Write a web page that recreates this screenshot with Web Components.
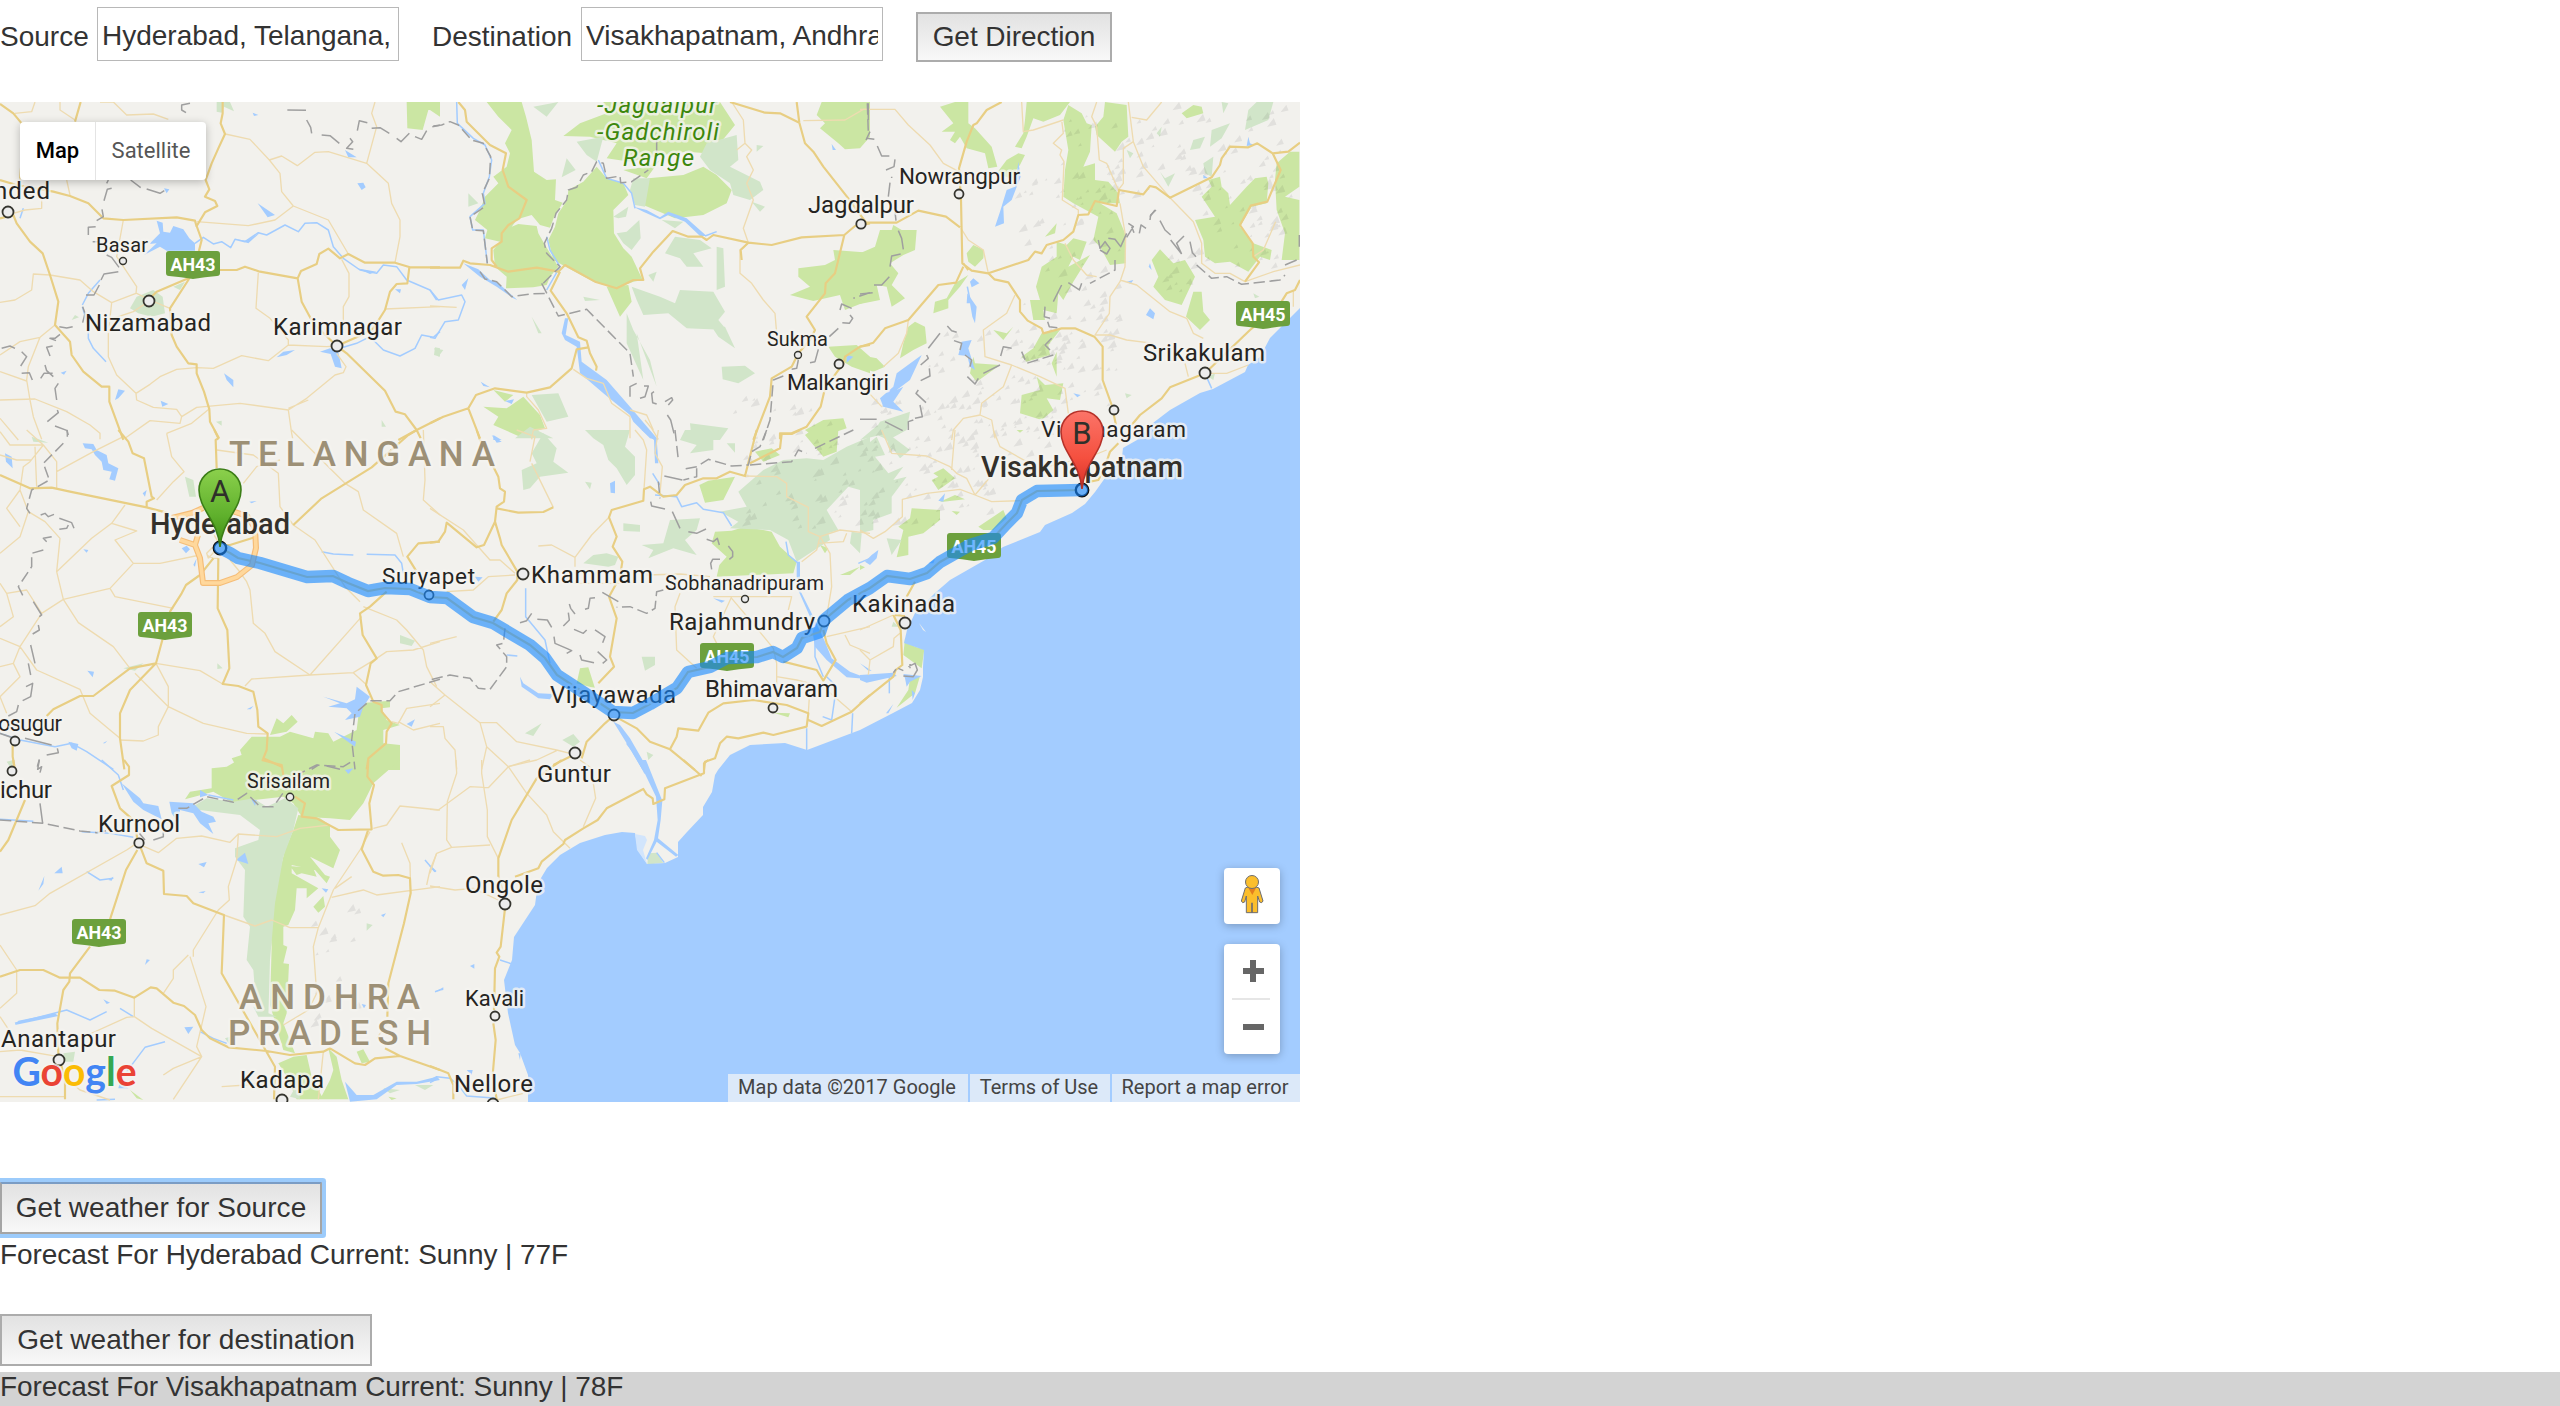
<!DOCTYPE html>
<html lang="en">
<head>
<meta charset="utf-8">
<title>Directions and weather</title>
<style>
html,body{margin:0;height:100%}
body{background:#fff;color:#333;font:28px/34px "Liberation Sans",Arial,sans-serif;overflow:hidden}
</style>
</head>
<body>
<weather-app></weather-app>
<script>
const define = (name, html, setup) => customElements.define(name, class extends HTMLElement {
  constructor() {
    super();
    this.attachShadow({mode: 'open'}).innerHTML = html;
  }
  connectedCallback() { if (setup) setup(this.shadowRoot, this); }
});

define('text-field', `
<style>
:host{display:flex;align-items:center;font-size:28px;white-space:nowrap;letter-spacing:var(--track,0)}
.box{box-sizing:border-box;width:302px;height:54px;border:1px solid #b8b8b8;padding:3px 4px 0;line-height:50px;overflow:hidden;margin-left:var(--gap,8px)}
.in{overflow:hidden;height:48px}
label{width:var(--label);flex:none;padding-top:5px}
</style><label><slot name="label"></slot></label><div class="box"><div class="in"><slot></slot></div></div>`);

define('push-button', `
<style>
:host{display:block;width:var(--w);flex:none}
button{display:block;box-sizing:border-box;width:100%;height:var(--h,52px);padding:0;border:2px solid #acacac;background:linear-gradient(#e2e2e2,#f8f8f8);color:#333;font:inherit;line-height:46px;white-space:nowrap;letter-spacing:var(--track,0.05px)}
:host([focused]) button{border-color:#7a9cc4 #a5a5a5 #a5a5a5;box-shadow:0 0 0 4px #9ccbfb;border-radius:1px}
</style><button><slot></slot></button>`);

define('map-type-switch', `
<style>
:host{display:flex;width:186px;height:58px;background:#fff;border-radius:4px;box-shadow:0 2px 8px rgba(0,0,0,.25);font:22px/58px Roboto,sans-serif;color:#565656}
div{flex:none;text-align:center}
.m{width:75px;border-right:1px solid #e4e4e4;color:#000;font-weight:500}
.s{width:110px}
</style><div class="m">Map</div><div class="s">Satellite</div>`);

define('map-controls', `
<style>
:host{display:flex;flex-direction:column;gap:20px;width:56px}
div{background:#fff;border-radius:4px;box-shadow:0 2px 8px rgba(0,0,0,.25)}
svg{display:block}
</style>
<div><svg width="56" height="56" viewBox="0 0 168 168"><g fill="#fbbe2c" stroke="#6d6d70" stroke-width="3"><path d="M64 60 72 57H96L105 60 117 99 113 104 107 102 101 84V134H67V84L62 102 56 104 52 99Z"/><path d="M84 104V134" stroke-width="5"/><path d="M73 60H96L85 81Z" fill="#e47f1e" stroke="none"/><circle cx="84" cy="42" r="19.5"/></g></svg></div>
<div><svg width="56" height="110" viewBox="0 0 56 110" fill="#666"><path d="M19 24h7v-8h6v8h8v6h-8v8h-6v-8h-7zM19 80h21v6H19z"/><path d="M8 54h38v2H8z" fill="#e6e6e6"/></svg></div>`);

define('map-credits', `
<style>
:host{display:flex;gap:2px;height:28px;font:20px/26px Roboto,sans-serif;color:#444;white-space:nowrap}
span{background:#dce9f9;text-align:center;text-indent:-2px}
.a{width:240px}.b{width:140px}.c{width:188px}
</style><span class="a">Map data ©2017 Google</span><span class="b">Terms of Use</span><span class="c">Report a map error</span>`);

/* Each tile: origin of the tile on the map, then outlines in thirds of a pixel.
   g park, f forest, w water body, l river, r minor road, R highway, b/d boundary */
const tiles = [
[0,100,{
g:'M1220,6 1320,6 1320,30 1285,30 1268,90 1222,85',
f:'M390,625 410,590 460,570 488,590 495,640 455,650 415,640ZM520,560 555,545 540,570ZM650,6 690,6 702,34 672,20 665,38 650,35ZM215,660 225,645 237,652ZM648,965 665,962 665,977ZM1145,960 1158,980 1145,980ZM1305,742 1320,745 1320,770 1302,765Z',
w:'M432,465 470,430 448,432 480,400 470,362 488,368 490,395 510,398 520,378 550,388 568,415 585,430 585,452 500,452 480,440ZM1035,150 1070,172 1045,172ZM773,310 825,345 803,352ZM960,755 990,745 1015,755 1025,805 1005,800 992,762ZM1072,250 1090,248 1097,262 1085,270ZM345,900 355,868 375,872 355,895ZM482,902 505,912 487,920ZM672,820 700,840 700,862 680,840ZM758,38 775,45 762,48ZM492,265 508,268 500,280ZM830,772 850,755 885,750 860,765ZM1185,568 1203,568 1200,580ZM182,818 200,812 192,824ZM708,418 740,422 780,398 745,430ZM1070,505 1130,515 1110,522Z',
l:'M585,430 610,412 640,432 665,425 692,443 705,418 735,425 775,398 800,405 855,375 895,395 915,370 950,368 985,390 1000,440 1030,475 1080,510 1130,520 1150,495 1190,500 1220,540 1290,570 1310,600M1020,745 1070,730 1110,710 1150,750 1200,768 1245,745 1265,705 1300,712 1320,695M247,615 265,580 300,540M247,620 265,680 265,715 280,745 318,785M60,355 70,325',
R:'M0,12 40,40 65,70M242,6 225,65M0,240 50,255 160,275 210,288 265,310 310,355 370,360 530,352 585,362 590,380M668,6 668,40 662,70 675,102 655,145 635,190 617,240 628,268 615,290 645,303 652,318 615,337 590,378 605,420 585,500 565,540 510,625 515,705 530,740 565,790 590,793 590,820 612,875 628,928 630,965 657,1015M0,355 40,345 50,370 90,425 128,460 150,525 175,605 165,675 210,725 215,765 250,815 305,860 328,860 328,905 370,1020M660,510 710,510 735,500 780,515 893,535 903,513 950,492 958,462 985,446 1020,475 1045,462 1095,488 1185,488 1230,502 1320,502M893,535 905,605 940,670 1010,738 1040,760 1155,872 1187,935 1215,943 1250,990 1320,955M1228,502 1222,550 1190,552 1170,575 1155,630 1120,685 1085,705 1010,738M1195,1020 1250,990 1262,1015M450,595 470,575 565,535M60,240 65,180',
r:'M300,6 340,6 380,45 460,42 505,58M676,102 750,118 808,180 840,220 845,275 880,318 985,360 1045,462M808,180 845,168 892,197 945,157 985,155 1100,190 1130,80 1115,40 1125,6M1100,190 1165,250 1175,310 1200,360 1200,410 1185,488M590,365 745,377 825,360 880,318M370,360 350,470 410,560 408,580 335,608 280,575 240,540 150,525 100,522 95,570 45,600 0,607M410,580 450,600 510,625M165,675 120,712 60,725 0,765M120,712 85,800 80,840 90,900 100,950 125,1018M0,815 80,843M0,900 105,897 200,935 270,975 300,1000 300,1018M0,955 55,1020M335,608 325,700 325,770 350,825 408,880 410,900 460,922 530,928 545,950 540,970 450,962 375,1015M325,660 400,635 445,605M408,880 450,853 480,830 530,808 590,803 640,805 725,767 805,782 865,735 980,740 1010,738M1010,760 1038,800 1030,818 1005,825 920,895 865,930 720,910 590,922 545,950M865,930 875,1000 878,1015M775,518 768,625 810,655 865,720 865,735M1025,478 1047,520 1047,590 1030,620 1030,700M1155,627 1320,620M180,6 180,30 225,60M45,40 95,35 105,6M500,1000 575,970 630,925M865,925 925,900M40,340 75,330 125,325 125,300M210,285 200,240',
b:'M570,10 545,15 545,30 558,38M862,30 918,31M920,60 932,82 935,100M965,105 990,107 1018,130M1050,115 1058,125 1040,145 1060,148M1072,92 1078,62 1102,68M1115,85 1140,83 1168,100M1190,115 1203,125 1228,100M1245,110 1265,118 1280,92M1297,80 1320,76M325,240 320,250M335,265 322,268 312,302M306,328 310,350 290,362M287,380 265,382 265,405M278,425 295,425M320,465 335,472 357,502M355,515 312,522 303,540M298,555 282,585 258,585M248,620 255,640 248,668M178,680 200,684 218,680M180,703 165,715 150,715 168,722M158,738 140,742 150,768M5,745 30,738 45,745M65,755 80,770 62,798M65,820 88,818 97,840M135,795 140,812 160,830M122,835 132,820 158,820M175,850 165,865 170,900M172,930 175,938 142,965M165,978 202,992 202,1010M392,240 422,263M440,267 480,280 493,272'}],
[430,100,{
g:'M170,6 275,6 288,50 305,120 312,215 350,240 378,238 375,300 398,308 372,352 360,383 330,375 305,345 262,358 245,380 265,372 320,378 325,400 345,435 385,500 360,530 350,555 310,562 228,565 230,530 195,500 190,450 210,425 165,415 172,390 135,360 150,330 165,290 205,250 190,230 230,200 240,160 225,130 245,90 205,50ZM355,420 375,380 385,340 412,300 415,270 460,245 500,200 530,235 580,250 595,285 550,330 552,400 580,445 605,470 638,540 610,545 560,565 490,545 425,510 370,480ZM530,560 595,555 605,605 570,650ZM400,108 450,70 530,40 520,6 870,6 915,75 870,130 830,160 770,155 700,165 600,185 530,175 560,130 480,110ZM580,210 650,200 690,180 650,235ZM655,235 760,225 820,200 860,225 905,270 890,310 820,345 735,355 640,315ZM1175,6 1320,6 1320,110 1290,145 1245,148 1225,130 1170,85 1185,70 1160,45ZM1210,450 1320,458 1320,600 1245,630 1230,585 1150,603 1080,585 1140,560 1105,530 1105,505 1185,495 1215,480ZM1195,740 1280,735 1320,770 1320,820 1265,800 1215,770ZM160,920 230,925 280,890 330,945 345,985 300,1000 270,1010 190,975 205,950ZM190,870 250,885 225,905ZM1125,990 1180,960 1240,955 1250,985 1160,1015ZM0,6 30,6 30,50 0,30Z',
f:'M410,175 437,210 395,232ZM610,235 660,235 645,320 615,315 600,270ZM830,130 920,105 925,180 900,200 990,245 1000,270 960,300 910,285 900,250 840,210 810,170ZM440,125 520,110 500,185 470,165ZM310,20 385,6 350,50ZM115,280 145,310 115,320ZM560,400 590,395 628,360 632,415 605,450 580,430ZM550,350 595,320 588,350 565,355ZM695,360 760,365 735,385ZM705,460 735,410 810,420 845,445 790,460 820,500 770,500 750,475ZM860,440 880,445 885,560 860,570ZM605,560 690,590 735,610 750,570 850,575 885,635 865,660 890,690 770,685 715,640 640,645 620,600ZM845,680 885,680 915,745 865,710ZM590,640 610,690 660,780 680,860 620,700 640,840 590,730ZM875,800 945,797 975,820 925,850 878,838ZM460,590 510,600 465,603ZM305,885 385,880 415,950 350,965ZM780,970 895,985 870,1020 785,1020ZM965,305 1005,320 990,335ZM255,1015 300,980 370,1015ZM12,745 40,750 25,770ZM305,650 335,700 325,700ZM980,135 1000,138 980,155ZM655,525 680,515 670,545Z',
w:'M100,490 145,508 180,540 200,545 262,600 250,595 200,560 150,530ZM395,700 405,655 415,655 407,705 450,725 455,785 530,840 600,920 685,1020 660,1015 610,965 600,945 520,880 450,820 440,740 405,720ZM152,845 180,862 160,858ZM225,903 252,898 245,912ZM95,555 115,535 105,570ZM610,320 650,330 690,352 715,335 770,355 830,408 810,408 765,365 715,345 690,358 640,335ZM1250,765 1270,770 1250,788ZM190,1005 215,1020 190,1020ZM1205,132 1218,150 1208,150Z',
l:'M80,6 82,70 130,115 165,135 185,180 178,230 160,280 165,310 120,350 128,390 160,390 172,490M350,570 390,500 360,450 350,410M505,180 530,235 580,250 605,280 615,325M825,408 860,395M0,570 25,600 95,585 105,605 85,660 45,665 15,715 0,712',
R:'M85,6 105,30 110,65 180,135 228,160 218,210 235,260 290,300 268,355 235,375 215,400 215,425 185,445 185,480 200,500M0,503 90,503 100,482 120,490 180,495 235,515 320,503 385,515 405,495 495,545 560,565 610,540 640,540 630,505 670,455 728,393 775,410 815,410 830,420 850,405 955,428 1025,435 1115,412 1243,405 1275,378 1320,370M390,515 362,572 410,640 445,712 470,722 480,760 500,800 498,812M475,742 440,748 425,805 360,862 290,878 195,865 138,885 115,925 40,950 0,970M115,925 150,1015M900,6 1005,38 1050,40 1108,68 1125,130 1150,155 1180,200 1255,295 1310,370M1100,6 1108,68M1243,405 1215,520 1187,550 1185,580 1130,650 1155,690 1140,720 1105,760 1085,800 1025,835 1020,890 970,1020M1320,735 1290,740 1245,770 1240,790 1185,865 1172,920 1130,980 1085,1000 1050,1000 1050,1018M955,428 932,450 935,480',
r:'M905,6 940,60 945,130 965,150 950,170 970,210 950,250 970,300 940,385 955,428 930,450 930,520 965,550 1000,600 1035,640 1040,700M920,150 945,130M1120,62 1245,60 1300,28 1320,28M0,618 80,622M430,808 470,835 520,850 545,910 600,950 600,1015M600,930 650,945 670,990M290,880 290,890 325,930 350,985 310,990 305,1018M645,960 665,985 685,1018',
d:'M10,78 35,75 60,65 85,75 125,120 160,130 182,170 178,235 157,280 165,320 120,350 128,390 160,392 172,490M150,515 165,537 200,545 245,590 300,582 350,580M340,550 390,500 350,460 343,430 365,385 378,340 410,300 415,270 440,262 460,225 485,215 500,185 520,190 530,235 570,228 572,248 605,245 655,210M680,155 680,120M335,550 385,648 470,628 600,760 610,830M1320,578 1270,595M1060,828 1030,840 1020,960 1000,1020',
b:'M1265,625 1235,612 1230,630M1260,645 1268,655 1258,670 1237,668M1225,685 1198,710M1165,748 1155,785 1140,788M1105,780 1100,805 1085,808M620,850 600,860 600,890M642,858 655,858 645,890 630,895M672,875 665,880 668,908 680,912M705,905 725,893 728,900 715,915M712,945 722,960 732,1000M1315,10 1315,60M1320,95 1308,120'}],
[860,100,{
g:'M0,10 22,10 20,100 0,118ZM240,20 285,6 325,6 325,70 345,85 395,140 412,200 385,205 375,160 320,145 300,110 285,130 270,120 285,95 245,95 280,70ZM410,220 440,180 475,160 495,165 480,195 450,235ZM500,6 630,6 600,45 550,65 520,55 500,110 485,145 465,140 490,100 495,60ZM610,60 625,15 665,40 680,70 695,75 690,155 670,200 705,190 705,240 745,245 775,280 780,310 720,310 770,340 795,400 797,490 750,495 720,440 700,420 715,350 640,310 610,290 615,210 625,150ZM705,80 730,50 735,6 800,15 805,110 785,125 765,155 710,105ZM965,40 1000,15 1025,20 1030,40 980,55ZM1045,240 1080,230 1085,260 1105,280 1110,315 1160,260 1185,235 1220,230 1225,250 1220,310 1175,320 1140,380 1180,430 1235,450 1230,480 1200,470 1165,515 1110,485 1065,490 1035,470 1030,420 1005,360 1065,350 1025,290 1055,260ZM1245,240 1250,190 1290,155 1318,155 1318,260 1275,290 1318,300 1318,480 1265,480 1275,400 1250,330ZM875,480 900,448 940,490 975,480 1005,530 965,615 915,600 880,560 895,530ZM1000,575 1025,575 1030,635 1050,660 1020,690 978,650ZM320,460 340,435 372,450 370,475 345,500 325,485ZM590,425 620,435 640,415 680,425 660,480 640,470 625,500 690,465 640,545 610,600 595,580 590,640 550,630 555,660 520,660 510,600 540,600 528,560 545,500 590,470ZM0,460 45,440 60,390 95,390 100,375 125,390 170,390 165,450 130,465 90,490 115,520 95,555 135,595 95,620 80,560 50,555 60,600 0,612ZM325,525 300,560 265,600 265,625 220,640 225,605 260,595 285,550ZM120,775 130,730 145,680 165,665 195,680 200,730 160,750ZM0,765 50,775 75,800 40,815 0,800ZM400,690 440,700 460,680 430,720ZM485,770 520,745 545,700 600,690 565,735 570,765 500,785ZM340,770 345,790 420,795 350,845 330,820ZM485,885 540,870 530,830 555,855 610,850 600,900 560,895 580,930 545,960 480,940ZM555,410 590,370 585,400ZM575,790 590,755 590,830Z',
f:'M1165,30 1190,6 1240,6 1225,60 1155,90ZM1000,120 1035,110 1020,145 990,150ZM1055,90 1110,70 1085,115 1050,140ZM1085,6 1105,10 1090,40ZM900,215 915,235 945,220 925,260ZM60,965 150,935 140,990 85,1020 40,1000ZM800,150 820,160 810,175ZM1030,190 1060,170 1055,230 1035,220ZM1045,830 1065,820 1060,840ZM795,880 815,885 800,895ZM890,100 905,80 900,110ZM1180,580 1198,590 1185,595ZM120,990 0,1020 60,970Z',
w:'M475,185 482,230 455,300 430,320 432,370 405,380 420,335 440,270 465,260ZM322,580 350,620 345,670 337,650 330,610 320,610ZM330,545 340,535 358,550 335,562ZM305,725 335,720 325,745 345,810 330,800 322,768 295,765ZM185,765 150,840 110,870 130,860 100,905 130,935 70,920 60,895 100,860 110,820ZM858,645 870,625 885,640 880,658ZM870,490 875,510 866,500ZM1165,110 1170,130 1182,135 1160,138ZM1030,225 1045,235 1030,235ZM800,545 820,540 812,552ZM640,880 662,885 652,892Z',
l:'M1035,820 1055,865M322,560 330,600',
R:'M425,6 380,30 350,70 340,75 320,125 297,205 303,300 307,490 335,512 385,520 505,480 525,455 545,460 560,435 610,420 640,395 655,345 685,343 705,303 770,318 777,270 850,283 870,258 888,262 930,293 1055,232 1080,195 1085,175 1110,140 1165,142 1192,130 1238,160 1285,155 1320,128M1238,160 1262,210 1222,305 1172,317 1140,375 1178,430 1180,470 1197,487 1155,545M15,368 110,368 175,332 258,350 300,382M310,500 288,548 235,555 145,660 75,685 40,728 0,740M310,490 325,510M385,520 403,538 445,547 480,600 480,635 503,662 545,685 550,700 605,685 645,685 703,710 728,740 728,840 755,915 768,975M1320,540 1305,570 1280,580 1255,620 1170,690 1035,820 930,862 905,895 840,945 815,975',
r:'M0,28 105,28 145,75 210,135 250,190 297,215M485,6 490,95 520,90 610,60M605,60 610,100 580,130 605,150 600,165 612,185 607,300 655,330 655,345M710,6 695,50 710,80 718,180 740,190 775,270 790,250 790,145 820,125 805,6M815,52 860,60 905,6M820,125 850,200 930,293 1000,365 1025,430 1025,490 1065,520 1110,520 1155,545 1240,515 1320,495M780,310 797,410 795,500 780,545 750,590 748,640 705,705 750,705 800,720 880,730M780,540 830,555 930,635 980,655 1000,700 1030,715M303,385 325,420 370,450 385,520M465,585 440,640 370,690 375,770 455,795 540,830 615,865 625,940M455,795 430,860 365,910 360,945 310,955 280,990 275,1020M145,660 140,700 115,760 70,800M0,850 65,920M975,790 985,830M1035,820 1100,820 1165,795M1247,365 1210,450 1180,470M615,430 640,480 680,525 710,530M360,945 395,960 405,1015M1300,570 1300,620',
d:'M22,10 25,100M20,115 43,118M885,330 870,350M1010,495 1055,535 1100,530 1145,553 1260,540 1275,525M765,480 765,510 690,550M580,765 500,790 485,755',
b:'M52,138 65,168 88,168M105,178 102,200 78,210M95,230 95,234M90,248 85,290M105,335 108,362M115,392 125,415 130,448M122,462 95,468 90,500M88,530 65,555 42,555M38,578 0,582M900,362 915,390 932,405M932,420 965,462M965,462 950,430 972,408M990,425 997,458 1008,470M1275,495 1310,480M1318,405 1318,440M870,360 872,345 888,330M625,548 658,570 665,550M605,555 580,605M555,620 553,650 570,655M563,665 568,680 592,683M575,715 555,735 570,750M455,745 430,740 422,768M420,795 370,820M355,835 345,852 322,830M315,765 335,780 330,800M240,700 205,745M262,678 275,692 290,697M282,722 305,730 300,750M200,765 205,775 182,795M208,805 210,828 182,842M175,870 168,880 198,908M180,915 187,950 165,955M160,960 145,965 145,990M75,965 128,992M0,958 50,958M715,420 720,445 735,425 750,445 740,462 720,450M745,415 765,418 782,440 800,400M805,370 820,380 800,412M838,400 843,375 858,385M815,380 822,398'}],
[0,430,{
g:'M720,960 755,920 840,920 870,905 940,925 945,905 985,910 1000,935 1070,900 1080,820 1170,812 1170,832 1145,835 1160,870 1200,885 1150,900 1150,940 1200,945 1200,1020 715,1020 695,985 725,975ZM810,915 830,865 850,880 875,855 893,875 860,905Z',
f:'M555,140 580,150 588,200 568,200ZM1200,615 1245,632 1235,648 1200,640ZM95,20 145,38 100,35ZM370,715 430,700 405,722ZM652,700 668,715 652,717ZM20,995 40,990 35,1018Z',
w:'M248,40 280,42 290,60 320,75 325,100 355,115 345,152 328,148 335,125 310,120 305,95 285,75 275,58 255,55ZM15,70 35,80 38,115 18,95ZM545,355 560,347 570,358 558,370ZM580,405 590,385 585,410ZM970,800 1040,820 1065,808 1070,770 1110,800 1090,830 1080,860 1035,870 1055,850 1040,835 985,830 1020,820ZM262,722 282,725 278,742ZM740,838 760,828 752,838ZM250,358 265,360 260,368ZM428,190 440,180 435,200ZM748,215 770,213 755,220ZM205,935 235,942 230,962 215,955ZM1002,905 1068,935 1065,950ZM308,940 322,932 315,940ZM1220,882 1245,868 1235,890Z',
l:'M965,365 1000,372 1060,375M1100,373 1185,375 1205,400 1210,430M0,910 60,930 165,950 215,940 260,965 305,995 340,1018',
R:'M0,135 90,175 155,173 210,185 440,232 500,248M355,0 385,35 398,70 432,85 455,200 462,205 440,215 440,232M643,0 655,25 647,30 650,115M1250,0 1225,15 1115,112 965,205 880,285M640,385 600,435 558,465 545,490 510,545 487,630 468,700 390,780 360,850 360,925 373,1018M468,700 390,715 280,798 240,798 160,838 140,858M655,385 653,535 682,600 688,715 668,762 715,768 760,785 772,840 775,890 803,910 800,960 790,985 845,1010M660,345 690,345 770,320M1320,335 1255,340 1222,380 1250,425M1160,485 1110,530 1080,550 1088,615 1130,685 1112,700 1098,765 1120,815 1145,825 1145,845 1175,880 1160,905 1158,940 1105,985 1100,1018M38,940 38,980 45,1018',
r:'M80,0 130,45 170,95 170,175M0,75 50,90 95,90M130,45 90,95 70,110 60,180 85,245 135,275 180,325 170,425 190,508 235,578 340,650 390,715M130,45 30,45 0,5M105,50 110,170M170,125 280,65 370,20M500,10 515,80 552,125 520,155 470,210M375,225 335,280 275,325 170,425M335,280 410,303 345,330 400,400 480,400 600,375M60,180 20,235 60,290M0,370 60,320 85,245M0,590 40,560 20,490 0,460M20,490 80,480 125,550 60,650 0,625M125,550 190,508 330,475 400,400M330,475 345,500 520,535M60,650 110,720 240,778 270,850 330,900 360,925M60,650 40,700 0,710M40,700 60,740 0,800 20,850M468,700 600,722 668,762M735,768 755,747 930,735 1060,728 1130,685M1060,728 1100,765M930,735 1085,560M690,390 715,420 740,455 750,480 760,580 795,610 825,665 930,735M405,730 505,830 610,880 740,910 803,912M468,700 505,770 505,830 475,890 475,915 430,933 360,930M1090,530 1190,570 1220,600 1270,660 1280,710 1310,770M1130,685 1160,665 1240,660 1320,635M1175,875 1195,880 1220,835 1320,820M1195,875 1240,900 1320,880M875,0 970,95 1035,160 1075,185 1090,240 1190,310 1210,380M650,60 760,75 835,130 840,230 880,285 945,330 1035,470 1080,515M1270,0 1275,150 1270,210 1320,255M730,160 770,110 840,90M620,260 645,320 660,345 625,385M625,385 620,370 645,345M655,385 640,385 620,375',
d:'M190,40 130,100 148,150 95,180 80,235 95,258M130,360 95,370 95,410 55,470 70,500M1320,748 1195,785 1170,812 1110,812 1065,850 1055,930 1065,1018',
b:'M200,0 205,15M122,255 135,250 145,260 162,253M178,265 215,278 222,295M205,285 200,295 178,298M155,320 130,325 140,335M100,515 125,555 118,560M115,585 118,600 98,612M92,645 105,700M85,700 92,735M78,770 98,760 92,800 68,812M55,825 50,845 25,858M0,910 50,928M75,925 155,945M172,955 175,968 140,975M118,988 112,1010M935,1018 955,1005M980,1008 1020,1018'}],
[430,430,{
g:'M855,305 905,302 945,290 1025,305 1050,350 1100,395 1090,430 860,440 868,405 890,380 845,340ZM808,165 835,152 915,140 880,210 825,218ZM1125,15 1145,0 1225,0 1220,65 1180,80 1150,45ZM975,65 1025,55 1050,75 1000,95ZM450,715 475,712 495,775 440,760ZM265,0 300,0 305,25 270,18ZM1030,848 1080,850 1075,862ZM1230,435 1290,410 1260,435ZM1170,345 1195,355 1185,370Z',
f:'M925,185 1000,120 1060,90 1130,85 1180,90 1250,50 1320,20 1320,150 1290,180 1255,170 1190,240 1225,300 1195,310 1200,330 1100,395 1075,330 1020,300 900,295 925,275 870,245 950,230ZM280,180 275,120 320,100 305,70 340,10 380,55 370,95 415,128 330,140 300,175ZM465,0 600,0 585,50 615,80 615,135 590,165 560,115 535,90 520,45 490,25ZM765,0 850,0 850,60 780,70 800,45 750,30ZM580,280 630,285 630,305 580,303ZM635,345 700,340 720,270 810,265 800,300 765,330 800,375 730,355 655,385 670,360ZM460,400 490,375 530,370 565,380 555,405 535,410ZM635,680 675,680 675,705 645,722ZM285,910 335,880 310,918ZM397,930 430,912 450,935 430,950ZM1265,305 1295,310 1290,370 1260,340ZM465,155 485,158 480,178ZM650,965 670,975 655,990ZM890,40 915,40 915,68Z',
w:'M635,0 655,0 680,25 685,100 675,100 672,30ZM540,160 555,152 555,190 542,188ZM270,740 280,760 325,790 370,792 360,808 325,805 275,770ZM1100,395 1110,395 1110,480 1150,560 1185,635 1205,685 1260,725 1320,748 1250,742 1190,690 1155,650 1140,560 1100,470ZM550,875 570,885 600,925 655,1020 638,1020 590,940ZM850,505 885,512 875,518ZM135,440 158,442 145,455ZM185,15 215,35 200,38Z',
l:'M668,130 690,165M675,195 740,200 755,230 800,218 820,238 880,248 905,288M287,475 287,560 345,630 360,700M1068,335 1075,375 1105,400M230,675 262,678M1130,895 1130,960M1268,850 1265,910M1190,740 1210,760 1215,800 1205,870 1178,860M1155,600 1155,680 1180,740M1320,385 1285,400M590,940 605,960 640,1020',
R:'M140,0 150,30 205,140 210,175 225,185 222,215 200,230 195,275 210,325 215,345 262,425 262,450 230,490 215,540 190,575M200,235 265,248 340,246 370,232M195,275 162,345 140,352 50,278 45,305 25,335 0,338M1110,0 1085,12 1055,12 1050,55 960,100M980,0 945,138 900,125 860,145 820,145 765,165 740,195 700,200 660,170 642,178 640,212 545,240 537,262 560,320 548,350 577,395 570,440 537,500 560,565 540,680 552,710 505,760M550,858 525,880 470,935 455,985M560,862 620,895 660,935 720,958 740,920 745,895 805,902 835,848 880,820 970,810 1070,825 1135,850 1130,890 1030,915 1000,908 925,925 890,920 870,940 855,985 825,995 822,1020M720,958 795,1020M1135,870 1175,888 1265,845 1320,795M1060,695 1160,720 1180,752 1217,690 1190,640 1180,600M370,1005 430,975',
r:'M615,0 640,30 650,60 642,178M685,0 675,70 697,110 690,190M305,100 370,232M260,0 315,20 300,95M0,235 100,300 180,390 210,390 255,430M50,485 130,480 175,440 255,435M325,348 365,345 435,382 435,410M435,382 485,315 537,262M650,435 750,432 840,440M430,460 570,460M750,490 735,530 740,660 800,715M850,500 905,500 850,620 860,640M905,500 1085,500 1075,540M905,505 960,570 1030,655 1040,700 1040,810M945,138 1040,140 1070,160 1070,200 1135,232 1135,305 1170,320 1230,300 1320,310M1170,320 1200,370 1205,470 1190,560M1165,340 1240,335 1250,310M1170,320 1160,360 1115,395M1190,620 1320,590M1245,615 1260,645 1320,670M0,640 80,620M0,755 45,795 150,878 200,878 260,935 380,960 420,970M45,795 0,830M150,878 170,950 155,1018M170,950 235,1010 320,990 380,962M0,890 40,890 45,925 75,960 80,1018M1040,740 1100,750 1140,760M1140,770 1135,850M1190,780 1265,845',
d:'M735,0 745,90M1010,0 990,50 965,65 955,105 905,108 835,88 800,110 760,118M960,105 1085,95 1105,60 1130,70M1155,55 1270,0M800,115 800,140 760,150M685,155 690,205M700,480 680,485 675,535 650,550 600,530 560,532M225,595 220,640 200,645 230,680 230,710 180,778 145,775 120,745 60,735 0,750',
b:'M703,138 757,150M662,215 665,228 705,237M727,245 750,295M775,305 800,310 828,297M830,328 850,335 862,325 868,345M895,348 908,365 908,380 898,388M870,388 848,388 842,400 845,418M517,487 565,515M495,503 480,505 475,535 465,538M418,522 422,535 435,552M415,548 418,570 400,588M432,598 460,610 470,600M495,600 525,620 518,638M503,665 530,690 518,700M450,675 455,690 492,698M372,620 375,640 410,655 425,662 410,670M322,568 352,570 365,592M270,578 290,572 305,550'}],
[860,430,{
g:'M155,235 240,240 240,270 190,310 145,320 145,375 110,382 130,300 115,290 150,265ZM355,290 430,240 440,265 400,300 370,300ZM135,625 165,650 193,658 185,715 130,675ZM180,738 165,790 110,833 145,780 150,745ZM215,150 235,140 220,130 250,115 285,145 235,180ZM240,215 285,195 315,208 250,215ZM275,243 300,245 290,255ZM0,405 15,412 0,420ZM470,0 490,0 480,8Z',
f:'M0,60 50,20 75,75 45,80 85,130 130,110 100,150 140,140 95,200 95,250 40,270 40,300 0,310ZM45,0 70,0 150,60 120,85 80,30ZM80,325 125,330 95,375ZM80,20 110,40 90,70ZM100,575 115,590 95,590Z',
w:'M15,395 35,375 55,360 50,385 30,405ZM235,212 255,190 250,215ZM0,735 100,728 110,738 20,758 0,750ZM78,850 100,822 85,850ZM205,400 225,388 220,400ZM0,700 35,722 25,722ZM130,732 185,738 150,755 140,770 135,745ZM155,780 165,790 158,810Z',
l:'M88,740 88,790',
R:'M165,455 140,500M100,555 122,600 127,705 107,720 100,740 0,820M105,555 135,558M775,40 750,65 735,110 715,150 690,155',
r:'M65,0 95,70 200,78 270,110 290,130 320,145 345,195M285,0 275,120M400,0 420,50 500,95M540,115 690,80 740,60M0,300 40,325 75,305 127,260 127,208 200,190 300,178 345,195 395,215 480,212M345,195 400,130M0,600 100,555M0,660 30,690 100,650 102,625 120,610M30,690 25,735',
b:'M145,710 165,700 172,720 160,740 130,738M100,728 108,718M115,715 130,722M150,702 150,715'}],
[0,760,{
g:'M715,0 1200,0 1120,70 1090,130 1050,180 990,175 905,170 880,130 850,110 760,120 700,130 640,95 555,118 570,95 635,85 635,25 680,20ZM895,165 960,175 990,195 990,230 1020,270 1000,325 930,290 975,345 990,350 980,370 945,330 875,315 875,340 955,385 920,415 920,385 890,385 885,450 865,495 850,500 850,555 862,560 850,610 867,612 860,760 850,790 885,880 850,870 810,735 815,560 810,490 830,370 855,270 880,210ZM870,318 940,325 950,350 905,340 890,345ZM940,440 970,408 975,440 955,458ZM835,910 880,890 920,885 935,950 970,1018 890,1018 860,950ZM985,865 1010,890 1025,960 1045,1018 960,1018 990,960 1000,930ZM390,990 430,1020 410,1015ZM1070,875 1090,868 1110,905 1085,910ZM1165,1010 1190,1015 1175,1020Z',
f:'M570,145 620,115 700,125 760,115 800,140 855,115 895,145 880,210 850,290 825,430 810,600 805,770 770,760 760,630 740,600 750,500 730,470 735,330 705,290 705,265 775,240 780,210 720,165 600,150ZM190,880 225,875 220,905 195,905ZM1100,490 1118,495 1100,512ZM760,740 830,770 775,770ZM675,835 690,830 690,855ZM1150,985 1200,990 1170,1000ZM1245,975 1300,975 1275,990ZM895,965 900,1018 870,1010Z',
w:'M508,125 580,130 605,155 640,170 648,185 625,190 640,222 600,190 580,160 540,150 535,190 515,160ZM365,70 420,115 430,130 475,138 485,178 430,150 400,125ZM708,300 735,278 745,312ZM595,312 620,306 612,322ZM163,340 185,320 188,340ZM115,392 133,348 130,372ZM553,802 580,800 565,822ZM435,615 440,598 450,600ZM45,795 55,782 165,760 175,768ZM1035,965 1070,1005 1120,1005 1190,965 1250,965 1310,950 1320,960 1250,972 1190,975 1130,1018 1050,1025ZM965,385 985,388 978,398ZM310,718 330,728 320,732ZM325,360 340,350 335,362ZM600,90 625,105 600,112ZM755,120 770,120 765,138ZM1035,30 1060,25 1045,42ZM1143,465 1158,460 1150,472ZM1085,732 1098,735 1092,745ZM360,965 385,985 355,985ZM595,397 617,393 610,400Z',
l:'M305,0 355,45 370,90M510,205 535,170M0,178 100,184M245,215 330,220 400,232M260,335 300,360 340,355M45,790 200,750 270,780 320,755M360,745 400,770M380,935 435,862 495,845M600,815 640,835 680,850M1275,300 1305,335M625,105 700,120M290,1020 345,1018M1305,695 1320,690',
R:'M372,0 387,20 387,45 335,78 360,145 405,185 412,240M417,250 440,310 490,332 492,402 560,408 580,430 672,465 665,640 745,780 825,920 822,1018M412,270 378,330 330,478M270,560 210,640 208,665 190,690 172,790 175,880 195,960 195,1018M0,650 60,630 130,630 180,653 240,653 298,690 345,692 403,713 452,682 470,685 520,728 552,738 585,765 605,810 630,835 685,862 800,873 870,885 970,875 990,865 1065,910 1095,915 1125,895 1200,888 1320,930M75,120 50,180 25,240 0,275M785,0 845,15 850,45M885,110 915,130 905,170 950,175 1015,210 1115,208 1108,130 1122,75 1102,50 1105,0M1105,208 1085,268 1120,335 1150,347 1195,345 1230,355 1232,400 1212,490 1165,670 1162,770M1155,865 1200,888M40,0 42,20',
r:'M0,465 105,437 150,400 380,270 410,250 475,278 530,235 605,228 690,247 715,222 830,230 900,205 990,195M715,222 710,300 685,380 688,420 655,450 580,570 580,590M672,465 765,498 815,480 870,503 955,503 1000,390 1080,270 1110,215M565,585 520,630 520,655 490,700M570,590 618,740 590,860 605,890 520,1018M605,890 520,925 490,945M403,713 403,770 455,805 605,890M403,770 380,772 230,840M0,555 50,630 50,700 0,745M0,770 40,830M995,412 1090,390 1130,405 1320,380M955,503 940,560 950,700 925,750 850,795M1005,385 1055,350M1205,248 1230,310 1232,400M1120,205 1160,195 1200,138 1320,150M1280,375 1290,330 1310,280M970,875 955,1018M665,980 740,975 820,960M1162,790 1130,835M0,875 60,870 175,890M0,1010 195,1010M210,965 240,990 330,1020',
d:'M0,180 130,190 155,195 240,213 290,218 330,210M535,145 560,145 620,110 700,127 740,100 780,140 820,140 870,70 900,40 950,15 1030,20 1062,0',
b:'M120,130 128,190M118,0 113,28 125,20 120,38M460,240 490,230 490,215M418,220 435,240'}],
[430,760,{
w:'M625,0 648,0 697,122 692,180 684,235 745,285 738,290 680,245 652,300 648,295 672,240 683,180 678,110Z M15,695 40,682 40,690ZM120,618 133,612 133,626ZM265,880 272,880 270,900ZM110,930 128,930 125,945Z',
l:'M210,600 243,611M0,962 20,950 60,955 85,975 110,1008 200,1015M0,318 18,335M680,278 703,308M625,0 645,40M0,968 25,955',
f:'M655,280 680,278 700,308 652,314Z',
R:'M395,0 320,55 245,180 205,295 205,350M835,0 822,10 822,40 705,85 703,118 670,132 668,115 650,103 640,87 530,145 503,180 460,205 405,240 400,252 335,305 325,325 255,350M760,0 815,48M225,445 212,560 200,578 208,590 195,625 192,750M190,790 197,840 188,945 200,1018M0,918 55,940 70,975 70,1018',
r:'M0,148 25,150 120,80 175,83 235,20 300,0M78,0 80,40 52,125 50,240 65,262 180,255M155,0 155,40 172,150 172,230 205,295M235,20 290,100 350,165 370,215 420,265M490,70 497,115 460,200M450,0 485,25M0,340 20,280 65,262M0,378 75,390 130,385 205,420M205,345 222,400M200,1020 280,1000'}]
];
const labels = `nded|-6|199|56|24
Basar|96|252|52|20
Nizamabad|85|330.5|126|24
Karimnagar|273|334.5|129|24
Jagdalpur|808|213|106|24
Nowrangpur|899|184|121|22.5
Sukma|767|346|61|20
Malkangiri|787|389.5|102|22.5
Srikakulam|1143|361|122|24
Vizianagaram|1041|437|145|22.5
Suryapet|382|584|93|22.5
Khammam|531|582.5|122|24
Sobhanadripuram|665|590|159|20
Rajahmundry|669|629.5|146|24
Kakinada|852|611.5|103|24
Vijayawada|550|702.5|126|24
Bhimavaram|705|697|133|24
osugur|-2|731|64|22
ichur|0|798|52|24
Kurnool|98|832|82|24
Srisailam|247|788|83|20
Guntur|537|781.5|74|24
Ongole|465|892.5|78|24
Kavali|465|1006|59|22
Nellore|454|1092|79|24
Anantapur|1|1047|115|24
Kadapa|240|1088|84|24
Visakhapatnam|981|477|202|29|k
Hyderabad|150|534|140|29|k
-Jagdalpur|597|113|120|24|p
-Gadchiroli|597|140|122|24|p
Range|623|166|71|24|p
TELANGANA|229|466|266|35|s
ANDHRA|239|1009|181|35|s
PRADESH|228|1045|203|35|s`.split('\n').map(s => s.split('|'));
const dots = [[8,212,5.5],[149,301,5.5],[337,346,5.5],[123,261,3.5],[861,224,4.7],[959,194,4.5],[798,355,3.5],[839,364,4.5],[1205,373,5.5],[1114,410,4.5],[429,595,4.5],[523,574,5.5],[745,599,3.5],[824,621,5.5],[905,623,5.5],[614,715,5.5],[773,708,4.5],[575,753,5.5],[15,741,4.5],[12,771,4.5],[139,843,4.7],[290,797,3.7],[505,904,5.5],[495,1016,4.5],[59,1060,5.5],[282,1100,5.5],[493,1104,5.5]];
const shields = [[166,251,'AH43'],[138,612,'AH43'],[72,919,'AH43'],[1236,301,'AH45'],[700,643,'AH45'],[947,533,'AH45']];
const route = 'M220,548 230,553 238,558 260,563 307,577 333,576 348,583 368,591 385,588 410,589 430,597 447,598 473,617 493,623 530,645 545,658 557,675 583,692 613,712 633,713 650,704 677,688 688,672 710,667 727,658 757,657 773,652 783,657 797,648 802,638 820,632 824,620 848,600 870,588 887,576 910,579 927,573 940,562 970,545 993,538 1007,523 1017,513 1022,500 1037,491 1082,490';
const ocean = 'M1300,308 1270,338 1260,357 1248,365 1245,372 1213,389 1200,393 1170,410 1153,423 1137,440 1123,448 1122,457 1105,478 1095,492 1085,504 1072,513 1045,525 1040,532 1003,547 985,560 950,580 935,593 915,613 907,630 904,643 924,650 923,667 923,677 920,690 912,703 893,713 860,730 852,733 807,750 785,743 750,745 730,755 718,770 715,775 712,792 703,807 703,815 687,832 678,842 678,857 665,863 647,864 638,850 635,833 622,832 605,835 580,843 560,855 547,868 538,883 535,905 514,937 512,960 504,980 508,1013 515,1045 520,1053 528,1075 528,1102 1300,1102Z';

/* small slanted hill shadows scattered over the eastern highlands */
function relief() {
  let seed = 7, out = '';
  const rnd = () => (seed = (seed * 16807) % 2147483647) / 2147483647;
  const areas = [[1060,110,230,90,80],[1010,180,110,200,80],[920,330,150,130,70],[870,400,120,130,80],[740,440,140,90,60],[1190,180,100,90,40],[1150,250,45,50,14],[1030,320,80,100,22],[310,900,45,130,16],[730,400,100,60,18]];
  for (const [x, y, w, h, n] of areas) for (let i = 0; i < n; i++) {
    const a = x + rnd() * w, b = y + rnd() * h, s = 2 + rnd() * 5;
    out += `M${a.toFixed(1)},${b.toFixed(1)} l${s.toFixed(1)},${(-s * 1.3).toFixed(1)} l${(s * .4).toFixed(1)},${s.toFixed(1)}Z`;
  }
  return out;
}
const layer = k => `<g class="${k}">` + tiles.map(([x, y, t]) => t[k] ? `<path transform="translate(${x} ${y}) scale(.33333)" d="${t[k]}"/>` : '').join('') + '</g>';
const pin = (x, y, c, t, edge) => `<g transform="translate(${x} ${y})"><path d="M0,0C-2,-26 -21,-38 -21,-57A21,21 0 0 1 21,-57C21,-38 2,-26 0,0Z" fill="url(#${c})" stroke="${edge}" stroke-width="1.6"/><text class="pin" text-anchor="middle" y="-45">${t}</text></g>`;

define('route-map', `
<style>
:host{display:block;flex:none;position:relative;width:1300px;height:1000px;overflow:hidden;background:#f2f1ed}
svg.map{display:block}
.g{fill:#cbe6a3}.f{fill:#d1e5c9}.w{fill:#a3ccff}
.l,.r,.R,.b,.d{fill:none;stroke-linejoin:round}
.l{stroke:#a3ccff;stroke-width:4.5}
.r{stroke:#eedbb0;stroke-width:4}
.R{stroke:#e8ce83;stroke-width:6.5}
.b,.d{stroke:#9f9f9f;stroke-width:4.5}
.d{stroke-dasharray:34 14}
text{font-family:Roboto,sans-serif;fill:#25241f;paint-order:stroke;stroke:rgba(245,244,240,.78);stroke-width:5px;stroke-linejoin:round}
.k{font-weight:500;fill:#33302b}.p{font-style:italic;fill:#3c870c}.s{font-weight:500;fill:#9d9076}
.pin{stroke:none;font-size:31px;fill:#2f302a}
.sh{stroke:none;fill:#fff;font-weight:700;font-size:19px}
.logo{font:700 40px Lato,"Open Sans",sans-serif;stroke-width:4px}
map-type-switch,map-controls,map-credits{position:absolute}
map-type-switch{left:20px;top:20px}
map-controls{right:20px;bottom:48px}
map-credits{right:0;bottom:0}
</style>
<svg class="map" width="1300" height="1000" viewBox="0 102 1300 1000">
<defs>
<linearGradient id="ga" x2="0" y2="1"><stop stop-color="#8bd04c"/><stop offset=".6" stop-color="#5fb02c"/><stop offset="1" stop-color="#3c8a12"/></linearGradient>
<linearGradient id="gb" x2="0" y2="1"><stop stop-color="#fb7468"/><stop offset=".6" stop-color="#f5503f"/><stop offset="1" stop-color="#d53028"/></linearGradient>
</defs>
${layer('g')}${layer('f')}
<path d="${relief()}" fill="#000" opacity=".065"/>
<path d="${ocean}" fill="#a3ccff"/>
<path d="M919,623 926,632 923,630Z" fill="#f2f1ed"/>
<path d="M635,834 645,836 647,840 643,850 647,864 637,850Z" fill="#d2e5fc"/>
${layer('w')}${layer('l')}${layer('r')}${layer('R')}
<path d="${route}" fill="none" stroke="#e8ce83" stroke-width="2.2"/>
<g fill="none" stroke-linejoin="round"><path d="M172,518 192,513 203,508M232,511 247,516 255,528 256,548 252,565 237,577 220,583 203,583 200,558 195,545 180,540M195,545 198,535" stroke="#f5bd78" stroke-width="6"/><path d="M172,518 192,513 203,508M232,511 247,516 255,528 256,548 252,565 237,577 220,583 203,583 200,558 195,545 180,540M195,545 198,535" stroke="#ffd89c" stroke-width="3.6"/></g>
${layer('d')}${layer('b')}
${labels.map(([t, x, y, w, s, c]) => `<text class="${c || ''}" x="${x}" y="${y}" font-size="${s}" textLength="${w}">${t}</text>`).join('')}
${dots.map(([x, y, r]) => `<circle cx="${x}" cy="${y}" r="${r}" fill="#ececec" stroke="#35352f" stroke-width="${r > 4 ? 1.8 : 1.4}"/>`).join('')}
${shields.map(([x, y, t]) => `<path d="M${x + 3},${y}h48q3,0 3,3v19q0,3 -3,3q-12,1 -24,3q-12,-2 -24,-3q-3,0 -3,-3v-19q0,-3 3,-3Z" fill="#6ca03d"/><text class="sh" x="${x + 4.5}" y="${y + 20}" textLength="45" lengthAdjust="spacingAndGlyphs">${t}</text>`).join('')}
<g fill="#eee" stroke="#111" stroke-width="2.4"><circle cx="220" cy="548" r="6.2"/><circle cx="1082" cy="490" r="6.2"/></g>
<path d="${route}" fill="none" stroke="#1688ff" stroke-opacity=".61" stroke-width="12.5" stroke-linejoin="round" stroke-linecap="round"/>
${pin(220, 547, 'ga', 'A', '#3b7d16')}${pin(1082, 489, 'gb', 'B', '#b63229')}
<text class="logo" x="12.5" y="1086" textLength="124" lengthAdjust="spacingAndGlyphs"><tspan fill="#4285f4">G</tspan><tspan fill="#ea4335">o</tspan><tspan fill="#fbbc05">o</tspan><tspan fill="#4285f4">g</tspan><tspan fill="#34a853">l</tspan><tspan fill="#ea4335">e</tspan></text>
</svg>
<map-type-switch></map-type-switch><map-controls></map-controls><map-credits></map-credits>`);

define('forecast-line', `
<style>:host{display:block;flex:none;height:34px;line-height:30px;white-space:nowrap;letter-spacing:-.06px}</style><slot></slot>`);

define('weather-app', `
<style>
:host{display:flex;flex-direction:column;height:1406px;overflow:hidden}
header{display:flex;flex:none;height:102px;padding-top:7px;box-sizing:border-box;align-items:flex-start}
header push-button{margin:5px 0 0 33px;--h:50px;--track:-.05px}
.dest{margin-left:33px}
.w1{margin-top:80px}
.w2{margin-top:40px}
forecast-line{margin-top:6px}
.last{background:#d3d3d3}
</style>
<header>
<text-field style="--label:89px"><span slot="label">Source</span>Hyderabad, Telangana,</text-field>
<text-field class="dest" style="--label:141px"><span slot="label">Destination</span>Visakhapatnam, Andhra</text-field>
<push-button style="--w:196px">Get Direction</push-button>
</header>
<route-map></route-map>
<push-button class="w1" focused style="--w:322px">Get weather for Source</push-button>
<forecast-line>Forecast For Hyderabad Current: Sunny | 77F</forecast-line>
<push-button class="w2" style="--w:372px">Get weather for destination</push-button>
<forecast-line class="last">Forecast For Visakhapatnam Current: Sunny | 78F</forecast-line>`);
</script>
</body>
</html>
